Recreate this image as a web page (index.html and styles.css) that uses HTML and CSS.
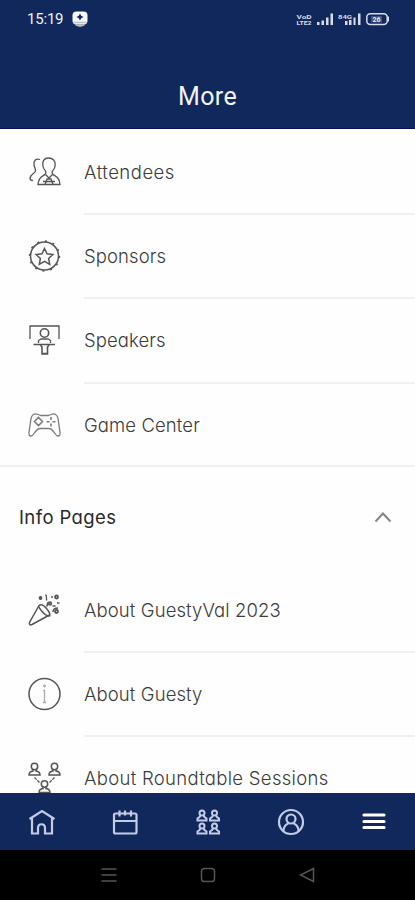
FILE: index.html
```html
<!DOCTYPE html>
<html lang="en">
<head>
    <meta charset="UTF-8">
    <meta name="viewport" content="width=device-width, initial-scale=1.0">
    <title>More</title>
    <link rel="stylesheet" href="styles.css">
</head>
<body>
    <header>
        <div class="status-bar">
            <span class="time">15:19</span>
            <svg class="notice" width="16" height="16" viewBox="0 0 16 16">
                <rect x="0.5" y="0.5" width="15" height="13" rx="4" fill="#f7f8fc"/>
                <path d="M3 13.5Q8 17 13 13.5" fill="#c4c8d2" stroke="#c4c8d2"/>
                <path d="M1.500 11.500h13" stroke="#b8bcc5" stroke-width="1.500"/>
                <path d="M8 2.500l1.200 2.300 2.300 1.200-2.300 1.200L8 9.500 6.800 7.200 4.500 6l2.300-1.200z" fill="#10285b"/>
            </svg>
            <svg class="signals" width="94" height="16" viewBox="0 0 94 16">
                <g fill="#d7dce8">
                    <text class="tiny" x="0.500" y="7.500" textLength="15" lengthAdjust="spacingAndGlyphs">VoD</text>
                    <text class="tiny" x="0.500" y="14" textLength="15" lengthAdjust="spacingAndGlyphs">LTE2</text>
                    <path d="M21 11h2.500v3H21zM25.500 9.500H28V14h-2.500zM30 6.500h2.500V14H30zM34.500 2.500H37V14h-2.500z"/>
                    <text class="tiny" x="42" y="7.500" textLength="14" lengthAdjust="spacingAndGlyphs">84G</text>
                    <path d="M49 10h2.500v4H49zM53 9h2.500v5H53zM57.500 6.500h2V14h-2zM62 2.500h2.500V14H62z"/>
                    <path d="M91.500 5.500h1.500v5h-1.500z"/>
                </g>
                <rect x="70.800" y="2.800" width="20.400" height="10.700" rx="3.500" fill="none" stroke="#d7dce8" stroke-width="1.500"/>
                <rect x="75" y="5" width="11" height="6.500" fill="#8290ad" opacity=".4"/>
                <text class="level" x="76.500" y="11" fill="#e6e9f1">26</text>
            </svg>
        </div>
        <h1>More</h1>
    </header>
    <main>
        <ul class="menu">
            <li>
                <svg class="icon" viewBox="0 0 34 34">
                    <path d="M12 4.500C7.500 3 5.500 6 6 10c.5 2.500 1.500 3.500 1.500 6C7 19 2 19 2 23.500c0 1.500 1 2 3 2"/>
                    <path d="M20.500 3C16 3 14.500 6 14.800 10c.2 3.500 1.500 4.500 2.700 6 .5 1 .5 2 0 3-1.500 2-7 2-7.500 10.500h22C31.500 21 26 21 24.500 19c-.5-1-.5-2 0-3 1.200-1.500 2.500-2.500 2.700-6 .3-4-2.200-7-6.700-7z"/>
                    <path d="M17.500 19.500l3.500 3.500 3.500-3.500M17 29.500l2-5.500h4l2 5.500M15 26.500h12"/>
                </svg>
                <span class="attendees">Attendees</span>
            </li>
            <li>
                <svg class="icon" viewBox="0 0 34 34">
                    <circle cx="16.500" cy="17" r="14" stroke-width="1.500"/>
                    <circle cx="16.500" cy="17" r="15" stroke-width="1.500" stroke-dasharray="2 5.850"/>
                    <path d="M16.500 9.500l2.500 5.300 5.900.7-4.300 4 1.100 5.800-5.200-2.900-5.200 2.900 1.100-5.800-4.300-4 5.900-.7z" stroke-width="1.500"/>
                </svg>
                <span>Sponsors</span>
            </li>
            <li>
                <svg class="icon" viewBox="0 0 34 34">
                    <path d="M2 16V3h29v13"/>
                    <circle cx="16.500" cy="10" r="4.200" stroke-width="1.600"/>
                    <path d="M10.500 20v-2.500l2.500-1.500h7l2.500 1.500V20M5.500 21.500h21.500"/>
                    <path d="M12.500 22l1.500 2V31h5.500v-7l1.500-2M14 30.500h5.500" stroke-width="1.600"/>
                </svg>
                <span>Speakers</span>
            </li>
            <li>
                <svg class="icon soft" viewBox="0 0 34 34">
                    <path d="M10 6.500C6 5 4 6.500 3 10.500L1 24.500c-.5 4.500 3 4.500 5 1 2-3 4-5 6-5h9c2 0 4 2 6 5 2 3.500 5.500 3.500 5-1l-2-14c-1-4-3-5.500-7-4l-3 1h-7z"/>
                    <path d="M10.500 9.500l4 4-4 4-4-4zM23 9v3M23 15.500v3M18.500 13.700h3M24.500 13.700h3" stroke-width="1.600"/>
                </svg>
                <span>Game Center</span>
            </li>
        </ul>
        <div class="section">
            <h2>Info Pages</h2>
            <svg width="18" height="12" viewBox="0 0 18 12">
                <path d="M1.500 10.500L9 2.500l7.500 8" fill="none" stroke="#858585" stroke-width="2"/>
            </svg>
        </div>
        <ul class="menu">
            <li>
                <svg class="icon" viewBox="0 0 34 34">
                    <path d="M11 12.500L1.500 29.500c-.5 2 .5 3 2.500 2l17.500-9.500M11 12.500c2-1.500 5 0 7.500 3s4.500 5.500 3 7.500c-2 0-5-1.500-7.500-4.500s-4-5-3-6z" stroke-width="1.500"/>
                    <path d="M18.500 13.500c1.500-1 0-3 2-4.500M25 19c0-3 2-4 5-4" stroke-width="1.500"/>
                    <path d="M17.500 1.500c2 2 0 4 1.500 6M23 4h2M29 10h2.500M24.500 13h3"/>
                    <g stroke-width="1.800"><circle cx="12.500" cy="5" r="1"/><circle cx="28.500" cy="4" r="1.500"/><circle cx="22" cy="10.500" r="1.300"/><circle cx="28.500" cy="18.500" r="1.500"/></g>
                </svg>
                <span>About GuestyVal 2023</span>
            </li>
            <li>
                <svg class="icon" viewBox="0 0 34 34">
                    <circle cx="16.500" cy="17" r="15.500" stroke-width="1.500"/>
                    <path d="M15 13.500h1.500v12M15 25.500h3" stroke="#aaa"/>
                    <circle cx="16.500" cy="9" r=".8" stroke="#aaa"/>
                </svg>
                <span>About Guesty</span>
            </li>
            <li>
                <svg class="icon" viewBox="0 0 34 34">
                    <g id="person" stroke-width="1.500">
                        <circle cx="6.500" cy="5.500" r="3.200"/>
                        <path d="M5 8.500v1.500c-3 .5-4 1.500-4 4h11c0-2.500-1-3.500-4-4V8.500"/>
                    </g>
                    <use href="#person" x="20"/>
                    <use href="#person" x="10" y="17.500"/>
                    <path d="M6.500 16.500l5 5M26.500 16.500l-5 5" stroke-dasharray="3 1"/>
                </svg>
                <span class="sessions">About Roundtable Sessions</span>
            </li>
        </ul>
    </main>
    <nav class="tabs">
        <svg viewBox="0 0 28 28">
            <path d="M1.500 11L14 3l12.500 8M4 10v15.500h6V20c0-5 7-5 7 0v5.500h7V10"/>
        </svg>
        <svg viewBox="0 0 28 28">
            <rect x="3" y="5.500" width="22.500" height="20" rx="1.500"/>
            <path d="M3 13h22M8.500 2.500v6M14 2.500v5M20 2.500v6"/>
        </svg>
        <svg viewBox="0 0 28 28">
            <g id="seat" stroke-width="2">
                <circle cx="8" cy="5" r="2.500"/>
                <path d="M6.500 7.500l-1 1.500-2 1.500V12.500h9v-2L10.500 9l-1-1.500"/>
            </g>
            <use href="#seat" x="12.500"/>
            <use href="#seat" y="13"/>
            <use href="#seat" x="12.500" y="13"/>
        </svg>
        <svg viewBox="0 0 28 28">
            <circle cx="14" cy="14" r="12"/>
            <circle cx="14" cy="11" r="4.500"/>
            <path d="M6.500 23c0-4 2.500-7 5-7.500M21.500 23c0-4-2.500-7-5-7.500"/>
        </svg>
        <svg class="active" viewBox="0 0 28 28">
            <path d="M4 7h20M4 13.500h20M4 19.500h20"/>
        </svg>
    </nav>
    <footer>
        <svg viewBox="0 0 16 16"><path d="M.5 2h15M.5 8h15M.5 14h15"/></svg>
        <svg viewBox="0 0 16 16"><rect x="1.500" y="1.500" width="13" height="13" rx="3"/></svg>
        <svg viewBox="0 0 16 16"><path d="M14.500 1.500v13L1.500 8z"/></svg>
    </footer>
</body>
</html>
```
FILE: styles.css
```css
body {
    margin: 0;
    height: 900px;
    display: flex;
    flex-direction: column;
    overflow: hidden;
    background-color: #fefefe;
    color: #3c3c3c;
    font-family: Inter, "Open Sans", sans-serif;
    font-feature-settings: "cv11";
}

header {
    height: 129px;
    flex: none;
    box-sizing: border-box;
    background-color: #10285b;
    border-bottom: 1px solid #0b0e55;
    color: #f2f3f6;
    text-align: center;
}

.status-bar {
    display: flex;
    align-items: center;
    height: 38px;
    padding: 0 25px 0 27px;
    font: 15px Roboto, sans-serif;
}

.time {
    width: 45px;
    text-align: left;
    letter-spacing: -0.2px;
}

.signals {
    margin-left: auto;
}

.tiny {
    font: 700 6px Roboto, sans-serif;
}

.level {
    font: 700 7px Roboto, sans-serif;
}

h1 {
    margin: 41px 0 0;
    font: 400 25px/36px Roboto, sans-serif;
    letter-spacing: 0.4px;
}

main {
    flex: 1;
    min-height: 0;
    overflow: hidden;
    padding-top: 1px;
}

.menu {
    list-style: none;
    margin: 0;
    padding: 0;
}

.menu li {
    display: flex;
    align-items: center;
    height: 84.2px;
    padding-left: 28px;
    font-size: 18.5px;
    font-weight: 300;
    letter-spacing: 0.1px;
    white-space: nowrap;
}

/* divider starts at the label, not at the icon */
.menu li span {
    flex: 1;
    height: 100%;
    box-sizing: border-box;
    line-height: 84px;
}

.menu li + li span {
    box-shadow: 0 -1px #f0f0f0, 0 1px #f0f0f0 inset;
}

.menu li .attendees {
    letter-spacing: 0.5px;
}

.menu li .sessions {
    letter-spacing: 0.3px;
}

.icon {
    width: 34px;
    height: 34px;
    margin-right: 22px;
    fill: none;
    stroke: #555;
    stroke-width: 1.3;
}

.soft {
    stroke: #7c7c7c;
}

.section {
    display: flex;
    align-items: center;
    justify-content: space-between;
    height: 103px;
    box-sizing: border-box;
    margin-top: -2px;
    padding: 0 23px 0 19px;
    border-top: 2px solid #f0f0f0;
}

h2 {
    margin: 0;
    color: #2a2a2a;
    font-size: 18.5px;
    font-weight: 400;
    letter-spacing: 0.4px;
}

.tabs {
    display: grid;
    grid-template-columns: repeat(5, 83px);
    align-items: center;
    justify-items: center;
    height: 57px;
    flex: none;
    background-color: #10285b;
}

.tabs svg {
    width: 28px;
    height: 28px;
    fill: none;
    stroke: #c3cce5;
    stroke-width: 2.2;
}

.tabs .active {
    stroke: #fff;
    stroke-width: 3.2;
    stroke-linecap: round;
}

footer {
    display: flex;
    align-items: center;
    justify-content: center;
    gap: 83px;
    height: 50px;
    flex: none;
    background-color: #000;
}

footer svg {
    width: 16px;
    height: 16px;
    fill: none;
    stroke: #555;
    stroke-width: 1.5;
}
```
